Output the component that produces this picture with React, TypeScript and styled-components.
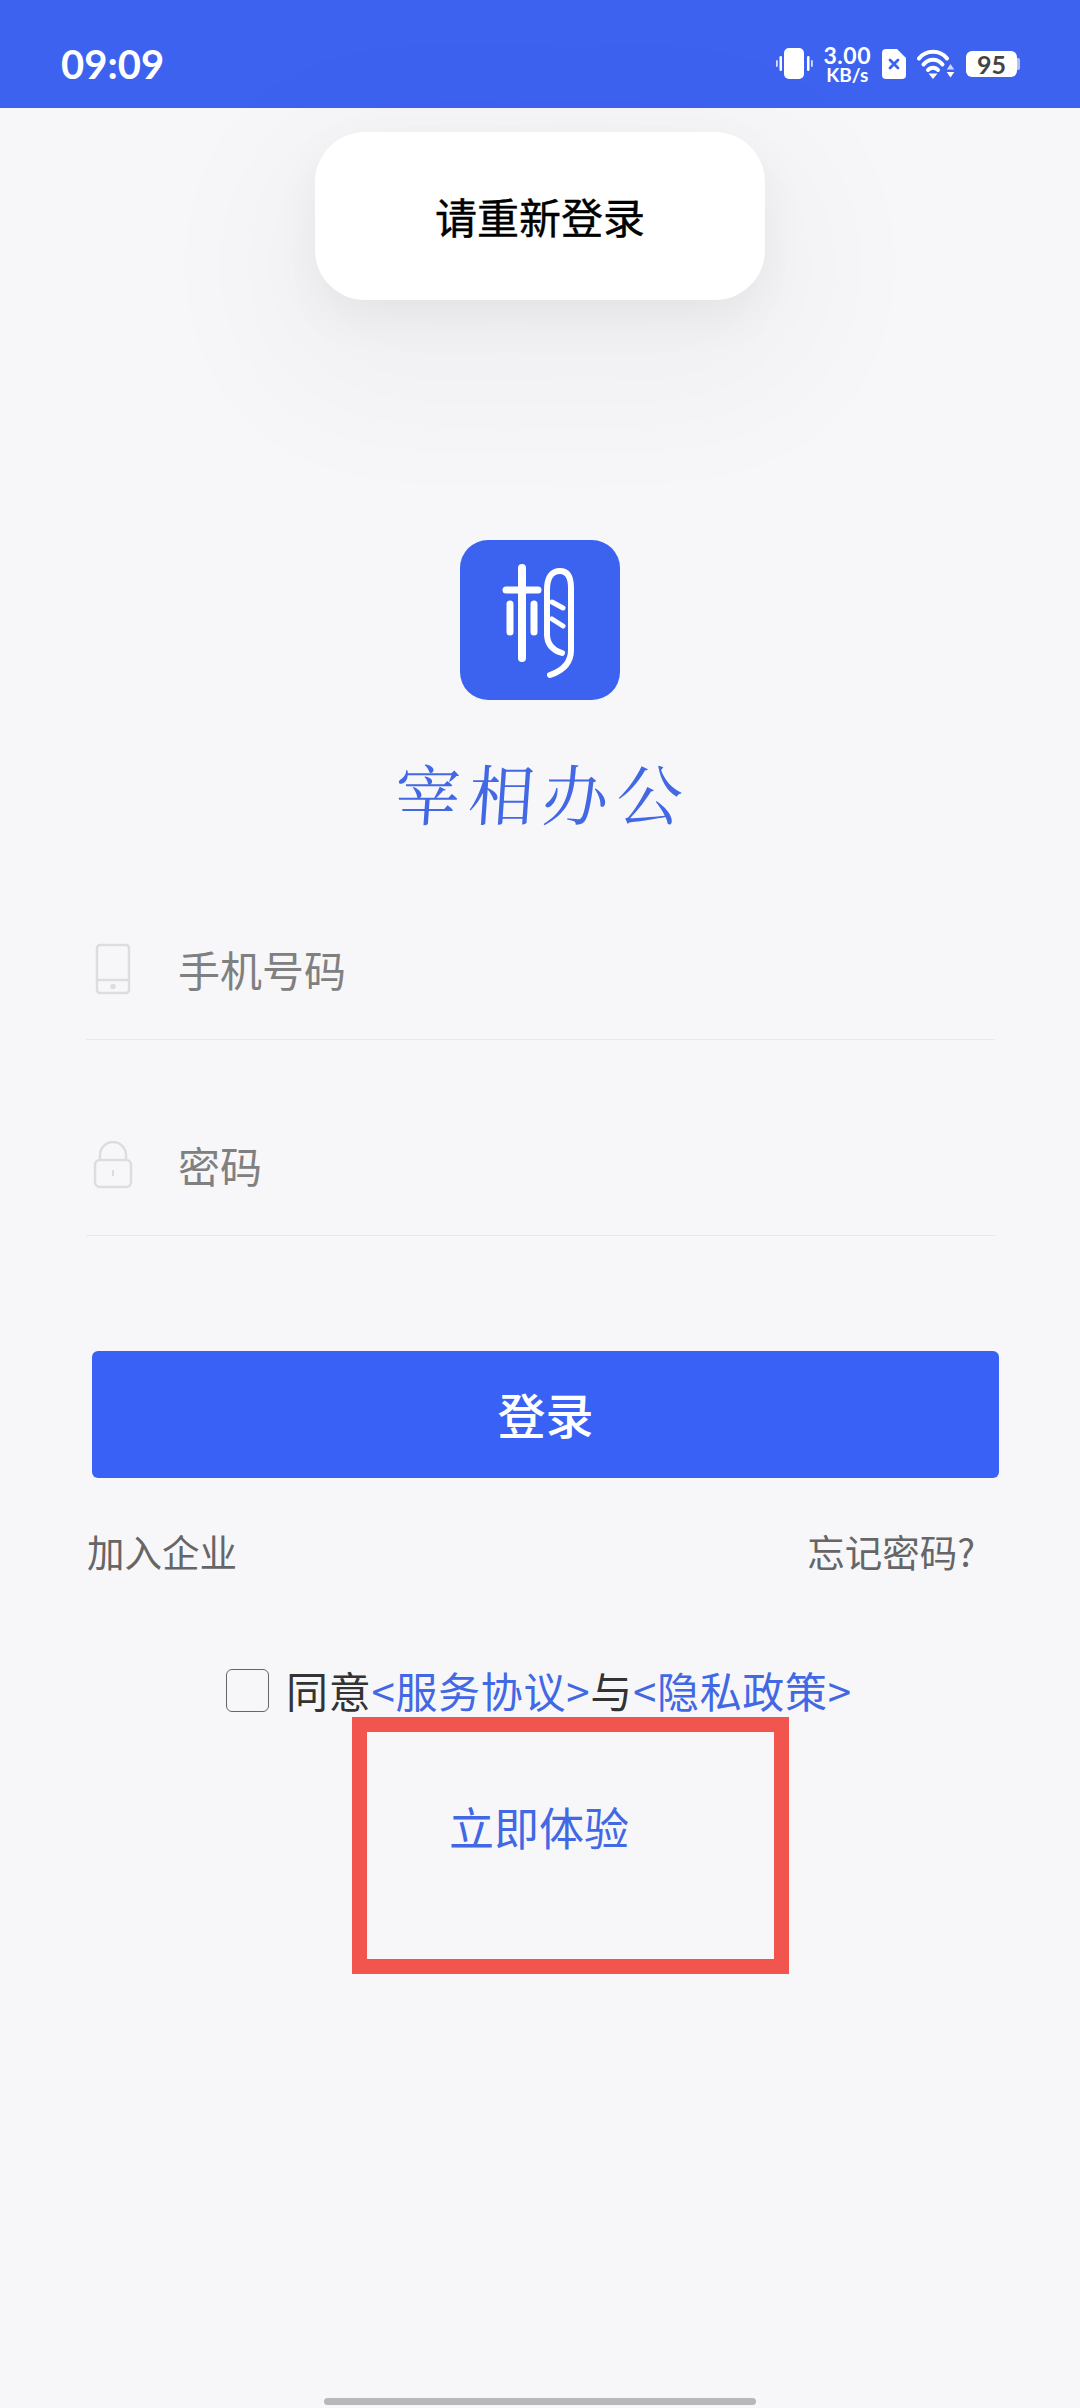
import React from 'react'
import styled, { createGlobalStyle } from 'styled-components'

const CJK = `"Noto Sans CJK SC", "Noto Sans", sans-serif`

const GlobalStyle = createGlobalStyle`
html, body {
  margin: 0;
  padding: 0;
  background: #f7f7f9;
}
`

const App: React.FC = () => {
  return (
    <Page>
      <GlobalStyle />
      <StatusBar>
        <Time>09:09</Time>
        <StatusIcons>
          <svg width="37" height="32" viewBox="0 0 37 32" fill="#fff">
            <rect x="8" y="0" width="20" height="31" rx="5" />
            <rect x="3.500" y="8" width="2.500" height="15" rx="1.200" />
            <rect x="0" y="12" width="1.800" height="7" rx="0.900" opacity="0.8" />
            <rect x="31" y="8" width="2.500" height="15" rx="1.200" />
            <rect x="35" y="12" width="1.800" height="7" rx="0.900" opacity="0.8" />
          </svg>
          <Speed>
            <SpeedValue>3.00</SpeedValue>
            <SpeedUnit>KB/s</SpeedUnit>
          </Speed>
          <svg width="24" height="30" viewBox="0 0 24 30">
            <path d="M4 0h11l9 9v17a4 4 0 0 1-4 4H4a4 4 0 0 1-4-4V4a4 4 0 0 1 4-4z" fill="#fff" />
            <path d="M8 11l8 8M16 11l-8 8" stroke="#3d62f0" strokeWidth="2.800" strokeLinecap="round" />
          </svg>
          <svg width="38" height="30" viewBox="0 0 38 30" fill="none">
            <path d="M2 9.500C9 0.500 23 0.500 30 9.500" stroke="#fff" strokeWidth="4" strokeLinecap="round" />
            <path d="M6.500 15.500C11.500 9 20.500 9 25.500 15.500" stroke="#fff" strokeWidth="4" strokeLinecap="round" />
            <path d="M11 21C13.500 18 18.500 18 21 21" stroke="#fff" strokeWidth="4" strokeLinecap="round" />
            <path d="M11.500 24.500h9l-4.500 5.500z" fill="#fff" />
            <path d="M33.500 15l3.800 5.500h-7.600z" fill="#fff" opacity="0.75" />
            <path d="M29.700 23h7.600l-3.800 5.500z" fill="#fff" />
          </svg>
          <Battery>
            <BatteryBody>95</BatteryBody>
            <BatteryNub />
          </Battery>
        </StatusIcons>
      </StatusBar>

      <Toast>请重新登录</Toast>

      <Brand>
        <LogoTile>
          <svg width="160" height="160" viewBox="0 0 160 160" fill="none" stroke="#fff" strokeLinecap="round" strokeLinejoin="round">
            <path d="M62 28V118" strokeWidth="8" />
            <path d="M46 50H78" strokeWidth="7" />
            <path d="M50 64V92" strokeWidth="7" />
            <path d="M74 64V92" strokeWidth="7" />
            <path d="M87 94V50C87 37 92 31 100 31C108 31 111 38 111 48V110C111 124 102 131 90 135" strokeWidth="6" />
            <path d="M87 94C87 104 92 110 102 113" strokeWidth="6" />
            <path d="M92 62L103 68" strokeWidth="5" />
            <path d="M92 79L103 86" strokeWidth="5" />
          </svg>
        </LogoTile>
        <BrandName>宰相办公</BrandName>
      </Brand>

      <Form>
        <Field>
          <FieldIcon>
            <svg width="36" height="52" viewBox="0 0 36 52" fill="none" stroke="#dcdde0" strokeWidth="2.500">
              <rect x="2" y="2" width="32" height="48" rx="3" />
              <path d="M2 37h32" />
              <circle cx="18" cy="43.500" r="1.500" fill="#dcdde0" />
            </svg>
          </FieldIcon>
          <Placeholder>手机号码</Placeholder>
        </Field>
        <Field $spaced>
          <FieldIcon>
            <svg width="40" height="48" viewBox="0 0 40 48" fill="none" stroke="#dcdde0" strokeWidth="2.500">
              <rect x="2" y="19" width="36" height="27" rx="5" />
              <path d="M7 19v-5a13 13 0 0 1 26 0v5" />
              <path d="M20 29v6" strokeWidth="2" />
            </svg>
          </FieldIcon>
          <Placeholder>密码</Placeholder>
        </Field>
        <LoginButton>登录</LoginButton>
        <LinkRow>
          <PlainLink>加入企业</PlainLink>
          <PlainLink>忘记密码?</PlainLink>
        </LinkRow>
      </Form>

      <Agreement>
        <CheckBox />
        <AgreementText>
          同意<Accent>&lt;服务协议&gt;</Accent>与<Accent>&lt;隐私政策&gt;</Accent>
        </AgreementText>
      </Agreement>
      <TryNow>立即体验</TryNow>
      <Highlight />
      <HomeBar />
    </Page>
  )
}

export default App

const Page = styled.div`
position: relative;
width: 1080px;
height: 2408px;
overflow: hidden;
display: flex;
flex-direction: column;
background: #f7f7f9;
font-family: ${CJK};
`
const StatusBar = styled.div`
height: 108px;
flex-shrink: 0;
box-sizing: border-box;
padding: 40px 60px 0 61px;
display: flex;
justify-content: space-between;
align-items: flex-start;
background: #3d62f0;
color: #fff;
`
const Time = styled.div`
font-family: Lato, sans-serif;
font-size: 40px;
font-weight: 700;
line-height: 48px;
`
const StatusIcons = styled.div`
display: flex;
align-items: center;
gap: 11px;
height: 48px;
`
const Speed = styled.div`
display: flex;
flex-direction: column;
align-items: center;
gap: 1px;
font-family: Lato, sans-serif;
font-weight: 700;
`
const SpeedValue = styled.span`
font-size: 23px;
line-height: 19px;
letter-spacing: 0.500px;
`
const SpeedUnit = styled.span`
font-size: 19px;
line-height: 17px;
`
const Battery = styled.div`
display: flex;
align-items: center;
`
const BatteryBody = styled.div`
width: 51px;
height: 26px;
border-radius: 6px;
background: #fff;
color: #444;
font-family: Lato, sans-serif;
font-size: 25px;
font-weight: 700;
line-height: 26px;
text-align: center;
`
const BatteryNub = styled.div`
width: 3px;
height: 12px;
border-radius: 0 2px 2px 0;
background: rgba(255, 255, 255, 0.6);
`
const Toast = styled.div`
position: absolute;
top: 132px;
left: 315px;
width: 450px;
height: 168px;
box-sizing: border-box;
padding-bottom: 2px;
display: flex;
align-items: center;
justify-content: center;
border-radius: 50px;
background: #fff;
color: #000;
font-size: 42px;
font-weight: 400;
-webkit-text-stroke: 0.4px #000;
box-shadow: 0 48px 144px 56px rgba(0, 0, 0, 0.03), 0 18px 48px rgba(0, 0, 0, 0.05);
`
const Brand = styled.div`
margin-top: 432px;
display: flex;
flex-direction: column;
align-items: center;
`
const LogoTile = styled.div`
width: 160px;
height: 160px;
border-radius: 28px;
overflow: hidden;
background: #3b63f0;
svg {
  display: block;
}
`
const BrandName = styled.div`
margin-top: 50px;
padding-left: 6px;
color: #4268e4;
font-family: "Noto Serif CJK SC", ${CJK};
font-size: 66px;
font-weight: 400;
line-height: 84px;
letter-spacing: 8px;
transform: skewX(-4deg);
`
const Form = styled.div`
margin: 0 85px 0 86px;
display: flex;
flex-direction: column;
`
const Field = styled.div<{ $spaced?: boolean }>`
height: 130px;
margin-top: ${({ $spaced }) => ($spaced ? '66px' : '76px')};
box-sizing: border-box;
padding-bottom: 12px;
display: flex;
align-items: center;
border-bottom: 1px solid #e9e9ec;
`
const FieldIcon = styled.div`
width: 54px;
margin-right: 38px;
display: flex;
justify-content: center;
`
const Placeholder = styled.div`
color: #808080;
font-size: 42px;
line-height: 56px;
`
const LoginButton = styled.div`
margin: 115px -4px 0 6px;
height: 127px;
box-sizing: border-box;
padding-bottom: 3px;
border-radius: 6px;
display: flex;
align-items: center;
justify-content: center;
background: #3961f5;
color: #fff;
font-size: 48px;
font-weight: 500;
`
const LinkRow = styled.div`
margin-top: 48px;
padding: 0 20px 0 1px;
display: flex;
justify-content: space-between;
`
const PlainLink = styled.div`
color: #666;
font-size: 37.500px;
line-height: 50px;
`
const Agreement = styled.div`
margin: 86px 0 0 226px;
display: flex;
align-items: center;
`
const CheckBox = styled.div`
width: 43px;
height: 43px;
box-sizing: border-box;
border: 1.500px solid #666;
border-radius: 6px;
`
const AgreementText = styled.div`
margin-left: 17px;
color: #333;
font-size: 42px;
line-height: 56px;
letter-spacing: 0.700px;
white-space: nowrap;
`
const Accent = styled.span`
color: #4268e4;
`
const TryNow = styled.div`
margin-top: 79px;
padding-right: 2px;
text-align: center;
color: #4268e4;
font-size: 45px;
line-height: 60px;
`
const Highlight = styled.div`
position: absolute;
top: 1717px;
left: 352px;
width: 437px;
height: 257px;
box-sizing: border-box;
border: 15px solid #f1554e;
`
const HomeBar = styled.div`
position: absolute;
left: 324px;
bottom: 3px;
width: 432px;
height: 7px;
border-radius: 4px;
background: #b8b8ba;
`
